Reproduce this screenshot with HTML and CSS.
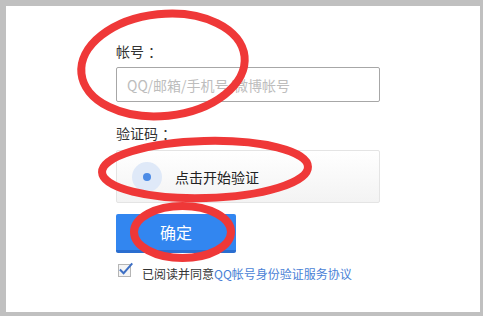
FILE: index.html
```html
<!DOCTYPE html>
<html lang="zh-CN">
<head>
<meta charset="utf-8">
<title>验证</title>
<link rel="stylesheet" href="styles.css">
</head>
<body>
<div class="frame">
  <div class="panel">
    <form class="form">
      <label class="label">帐号<span class="colon">：</span></label>
      <div class="input"><span class="placeholder">QQ/邮箱/手机号/微博帐号</span></div>
      <label class="label label-code">验证码<span class="colon">：</span></label>
      <div class="captcha">
        <span class="captcha-dot"><span class="captcha-core"></span></span>
        <span class="captcha-text">点击开始验证</span>
      </div>
      <div class="btn">确定</div>
      <div class="agree">
        <svg class="check" width="16" height="16" viewBox="0 0 16 16">
          <rect x="0.5" y="2.5" width="12" height="12" fill="#f4f4f4" stroke="#b5b5b5"/>
          <path d="M2.6 8.2 L5.6 11.2 L13.6 2.2" fill="none" stroke="#3d6fc4" stroke-width="2" stroke-linecap="square"/>
        </svg>
        <span class="agree-text">已阅读并同意<a class="agree-link">QQ帐号身份验证服务协议</a></span>
      </div>
    </form>
  </div>
  <svg class="marks" width="483" height="316" viewBox="0 0 483 316">
    <ellipse cx="163" cy="65" rx="82" ry="51" transform="rotate(-6 163 65)" />
    <ellipse cx="205" cy="169.5" rx="103" ry="28.5" transform="rotate(-1.5 205 169.5)" />
    <ellipse cx="182.5" cy="232" rx="48.5" ry="26" />
  </svg>
</div>
</body>
</html>
```
FILE: styles.css
```css
html, body {
  margin: 0;
  padding: 0;
}
body {
  width: 483px;
  height: 316px;
  background: #c0c0c0;
  font-family: "Noto Sans CJK SC", "Liberation Sans", sans-serif;
  overflow: hidden;
}
.frame {
  position: relative;
  width: 483px;
  height: 316px;
  box-sizing: border-box;
  padding: 6px 3px 4px 6px;
}
.panel {
  background: #ffffff;
  height: 306px;
  box-sizing: border-box;
  padding: 35px 0 0 110px;
}
.form {
  display: flex;
  flex-direction: column;
  width: 264px;
  margin: 0;
}
.label {
  font-size: 14px;
  line-height: 20px;
  color: #333;
  height: 20px;
}
.colon {
  margin-left: 4px;
}
.input {
  margin-top: 6px;
  height: 35px;
  box-sizing: border-box;
  border: 1px solid #a7a7a7;
  border-radius: 2px;
  display: flex;
  align-items: center;
  padding-left: 10px;
}
.placeholder {
  font-size: 14px;
  color: #bdbdbd;
  line-height: 20px;
}
.label-code {
  margin-top: 21px;
}
.captcha {
  margin-top: 7px;
  height: 53px;
  box-sizing: border-box;
  border: 1px solid #e4e4e4;
  border-radius: 2px;
  background: linear-gradient(#ffffff, #f3f3f3);
  display: flex;
  align-items: center;
  padding-left: 15px;
}
.captcha-dot {
  width: 30px;
  height: 30px;
  border-radius: 50%;
  background: #dfe9f8;
  display: flex;
  align-items: center;
  justify-content: center;
}
.captcha-core {
  width: 8px;
  height: 8px;
  border-radius: 50%;
  background: #4c8be6;
}
.captcha-text {
  margin-left: 13px;
  font-size: 14px;
  color: #222;
  line-height: 20px;
}
.btn {
  margin-top: 11px;
  width: 120px;
  height: 39px;
  box-sizing: border-box;
  background: #3286f0;
  border-bottom: 3px solid #2a6ed0;
  border-radius: 2px;
  color: #fff;
  font-size: 16px;
  line-height: 36px;
  text-align: center;
}
.agree {
  margin-top: 9px;
  display: flex;
  align-items: flex-start;
  padding-left: 2px;
}
.check {
  display: block;
  margin-top: 0;
}
.agree-text {
  margin-left: 8px;
  margin-top: 3px;
  font-size: 12px;
  line-height: 18px;
  color: #333;
}
.agree-link {
  color: #4a7fd6;
}
.marks {
  position: absolute;
  left: 0;
  top: 0;
  pointer-events: none;
}
.marks ellipse {
  fill: none;
  stroke: #ef3838;
  stroke-width: 8;
}
```
